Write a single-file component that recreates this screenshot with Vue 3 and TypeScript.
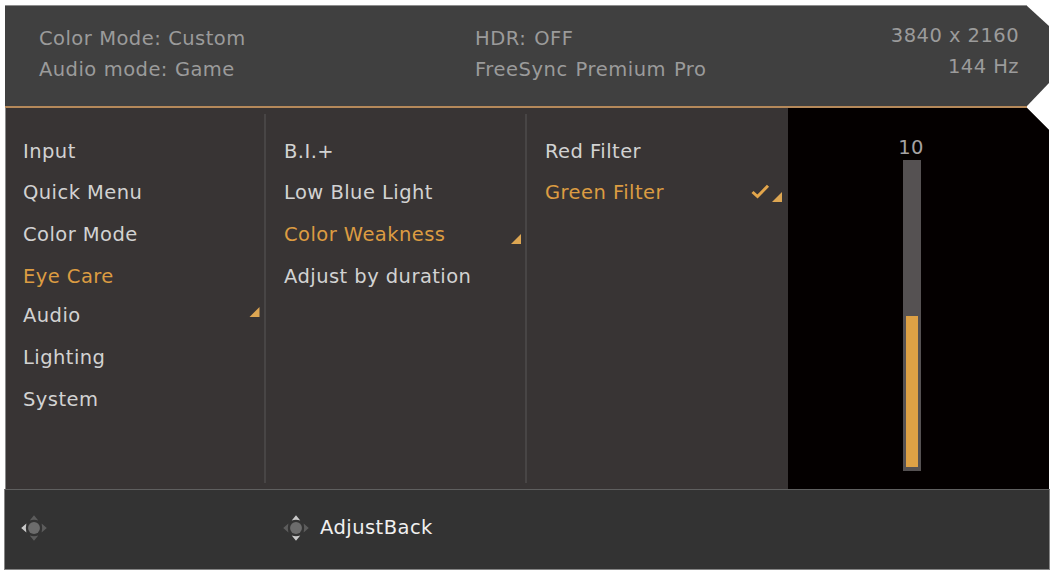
<script setup lang="ts">
interface MenuItem {
  label: string
  active?: boolean
  checked?: boolean
  arrow?: boolean
  compact?: boolean
}

const columns: MenuItem[][] = [
  [
    { label: 'Input' },
    { label: 'Quick Menu' },
    { label: 'Color Mode' },
    { label: 'Eye Care', active: true, compact: true },
    { label: 'Audio', arrow: true },
    { label: 'Lighting' },
    { label: 'System' },
  ],
  [
    { label: 'B.I.+' },
    { label: 'Low Blue Light' },
    { label: 'Color Weakness', active: true, arrow: true },
    { label: 'Adjust by duration' },
  ],
  [
    { label: 'Red Filter' },
    { label: 'Green Filter', active: true, checked: true, arrow: true },
  ],
]

const hints = [
  { keys: 'horizontal', label: '' },
  { keys: 'vertical', label: 'AdjustBack' },
]

const level = 10
const maxLevel = 20
</script>

<template>
  <div class="osd">
    <header class="status">
      <div class="status-mode">
        <div>Color Mode: Custom</div>
        <div>Audio mode: Game</div>
      </div>
      <div class="status-hdr">
        <div>HDR: OFF</div>
        <div>FreeSync Premium Pro</div>
      </div>
      <div class="status-signal">
        <div>3840 x 2160</div>
        <div>144 Hz</div>
      </div>
    </header>
    <div class="rule"></div>

    <main class="menu">
      <ul v-for="(items, i) in columns" :key="i" class="column">
        <li v-for="item in items" :key="item.label" :class="{ active: item.active, compact: item.compact }">
          <span class="label">{{ item.label }}</span>
          <svg v-if="item.checked" class="check" viewBox="0 0 19 15">
            <path d="M1.5 8 L6.5 12.5 L17 1.8" fill="none" stroke="#e2a54b" stroke-width="3" />
          </svg>
          <svg v-if="item.arrow" class="arrow" viewBox="0 0 10 10">
            <path d="M10 0 V10 H0 Z" fill="#dda652" />
          </svg>
        </li>
      </ul>

      <section class="slider">
        <span class="value">{{ level }}</span>
        <div class="track">
          <div class="fill" :style="{ height: (level / maxLevel) * 100 + '%' }"></div>
        </div>
      </section>
    </main>

    <footer class="hints">
      <div v-for="hint in hints" :key="hint.keys" class="hint">
        <!-- Joystick -->
        <svg class="stick" :class="hint.keys" viewBox="0 0 28 28">
          <circle cx="14" cy="14" r="6.4" fill="#6c6c6c" />
          <path class="up" d="M9.4 6 L14 0.2 L18.6 6 Q14 4.4 9.4 6 Z" />
          <path class="down" d="M9.4 22 L14 27.8 L18.6 22 Q14 23.6 9.4 22 Z" />
          <path class="left" d="M5.8 9.2 L0.2 14 L5.8 18.8 Q4.6 14 5.8 9.2 Z" />
          <path class="right" d="M22.2 9.2 L27.8 14 L22.2 18.8 Q23.4 14 22.2 9.2 Z" />
        </svg>
        <span>{{ hint.label }}</span>
      </div>
    </footer>
  </div>
</template>

<style>
body {
  background: #fff;
}
</style>

<style scoped>
.osd {
  box-sizing: border-box;
  width: 1051px;
  height: 573px;
  padding: 5px 1px 0 4px;
  font-family: Verdana, "DejaVu Sans", sans-serif;
  font-size: 19.5px;
  letter-spacing: 0.45px;
  color: #d2d2d2;
  white-space: nowrap;
}

/* Status bar */
.status {
  box-sizing: border-box;
  display: flex;
  height: 101px;
  margin: 0 1px 0 1px;
  padding: 17px 30px 0 34px;
  border-top: 1px solid #8d8d8d;
  background: #404040;
  color: #9b9b9b;
  line-height: 31px;
  clip-path: polygon(0 0, 1021px 0, 100% 21px, 100% 78px, 1022px 100%, 0 100%);
}

.status-mode {
  width: 436px;
  word-spacing: 0.4px;
}

.status-hdr {
  letter-spacing: 0.55px;
  word-spacing: 1px;
}

.status-signal {
  margin-top: -3px;
  margin-left: auto;
  text-align: right;
}

.rule {
  width: 1022px;
  height: 2px;
  margin-left: 1px;
  background: #b5895a;
}

/* Menu columns */
.menu {
  box-sizing: border-box;
  display: flex;
  height: 381px;
  margin: 0 1px 0 1px;
  border-left: 1px solid #8a8a8a;
  background: #383434;
  clip-path: polygon(0 0, 1022px 0, 100% 22px, 100% 100%, 0 100%);
}

.column {
  box-sizing: border-box;
  width: 261px;
  height: 369px;
  margin: 6px 0 0;
  padding: 17px 4px 0 17px;
  border-right: 2px solid #484545;
  list-style: none;
}

.column:nth-child(1) {
  width: 260px;
}

.column:nth-child(2) {
  padding-left: 18px;
}

.column:nth-child(3) {
  padding-left: 18px;
  border-right-color: transparent;
}

.column li {
  display: flex;
  align-items: center;
  height: 42px;
  line-height: 42px;
}

.column li:first-child {
  height: 41px;
}

.column li.compact {
  height: 39px;
}

.column li.compact .label {
  margin-top: 3px;
}

.active {
  color: #dc9c42;
}

.label {
  margin-right: auto;
}

.arrow {
  width: 10px;
  height: 10px;
  margin-top: 7px;
}

.column:nth-child(1) .arrow {
  width: 11px;
  margin-top: -8px;
}

.check {
  width: 19px;
  height: 15px;
  margin: -3px 2px 0 0;
}

/* Level slider */
.slider {
  display: flex;
  flex: 1;
  flex-direction: column;
  align-items: center;
  padding: 27px 13px 0 0;
  background: #040000;
  color: #a5a2a2;
}

.value {
  height: 25px;
  margin-right: 2px;
  line-height: 25px;
}

.track {
  box-sizing: border-box;
  display: flex;
  align-items: flex-end;
  width: 18px;
  height: 311px;
  padding: 4px 3px;
  background: #555152;
}

.fill {
  width: 100%;
  background: #dea145;
}

/* Footer */
.hints {
  box-sizing: border-box;
  display: flex;
  height: 81px;
  padding: 25px 0 0 16px;
  border: 1px solid #858585;
  border-top-color: #5f5f5f;
  background: #333;
  color: #f0f0f0;
}

.hint {
  display: flex;
  gap: 11px;
  width: 262px;
  height: 26px;
  line-height: 26px;
}

.stick {
  width: 26px;
  height: 26px;
}

.stick path {
  fill: #5c5c5c;
}

.stick.horizontal .left,
.stick.vertical .up,
.stick.vertical .down {
  fill: #c9c9c9;
}
</style>
